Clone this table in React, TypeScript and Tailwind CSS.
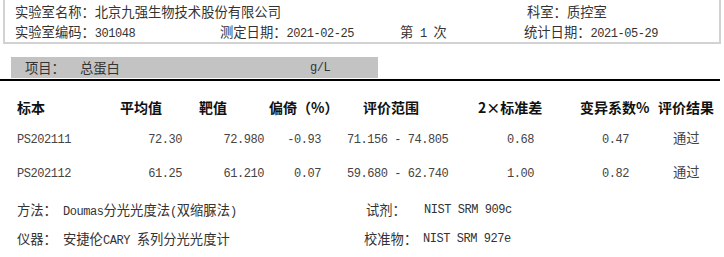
import React from "react";

const L = ({ children }: { children: React.ReactNode }) => (
  <span className="font-['Liberation_Mono',monospace] text-[12px] tracking-[-0.45px] whitespace-pre">
    {children}
  </span>
);

export default function App() {
  return (
    <div className="w-[724px] h-[257px] overflow-hidden bg-white font-['Noto_Sans_CJK_SC',sans-serif] text-[13.3px] leading-none">
      {/* header box */}
      <div className="mx-[3px] h-[44px] border-2 border-t-0 border-[#d2d2d2] pt-[2px] text-[#333]">
        <div className="flex h-[20px] items-center pl-[10px]">
          <span className="w-[512px]">实验室名称：北京九强生物技术股份有限公司</span>
          <span>科室：质控室</span>
        </div>
        <div className="flex h-[20px] items-center pl-[10px]">
          <span className="w-[205px]">
            实验室编码：<L>301048</L>
          </span>
          <span className="w-[180px]">
            测定日期：<L>2021-02-25</L>
          </span>
          <span className="w-[124px]">
            第<L> 1 </L>次
          </span>
          <span>
            统计日期：<L>2021-05-29</L>
          </span>
        </div>
      </div>

      {/* item bar */}
      <div className="mt-[13px] ml-[11px] flex h-[21px] w-[367px] items-center bg-[#c3c3c3] pl-[14px] text-[#333]">
        <span className="w-[55px]">项目：</span>
        <span className="w-[230px]">总蛋白</span>
        <L>g/L</L>
      </div>
      <div className="mt-[1px] h-[2px] w-[720px] bg-black" />

      {/* table header */}
      <div className="mt-[16px] flex h-[20px] items-center pl-[17px] text-[14px] font-bold text-[#111]">
        <span className="w-[103px]">标本</span>
        <span className="w-[79px]">平均值</span>
        <span className="w-[70px]">靶值</span>
        <span className="w-[94px]">偏倚（%）</span>
        <span className="w-[115px]">评价范围</span>
        <span className="w-[102px]">2×标准差</span>
        <span className="w-[78px]">变异系数%</span>
        <span>评价结果</span>
      </div>

      {/* rows */}
      <div className="mt-[11px] flex h-[20px] items-center pl-[17px] text-[#444]">
        <span className="w-[100px]"><L>PS202111</L></span>
        <span className="w-[65px] text-right"><L>72.30</L></span>
        <span className="w-[82px] text-right"><L>72.980</L></span>
        <span className="w-[57px] text-right"><L>-0.93</L></span>
        <span className="w-[26px]" />
        <span className="w-[103px]"><L>71.156 - 74.805</L></span>
        <span className="w-[84px] text-right"><L>0.68</L></span>
        <span className="w-[95px] text-right"><L>0.47</L></span>
        <span className="pl-[44px]">通过</span>
      </div>
      <div className="mt-[14px] flex h-[20px] items-center pl-[17px] text-[#444]">
        <span className="w-[100px]"><L>PS202112</L></span>
        <span className="w-[65px] text-right"><L>61.25</L></span>
        <span className="w-[82px] text-right"><L>61.210</L></span>
        <span className="w-[57px] text-right"><L>0.07</L></span>
        <span className="w-[26px]" />
        <span className="w-[103px]"><L>59.680 - 62.740</L></span>
        <span className="w-[84px] text-right"><L>1.00</L></span>
        <span className="w-[95px] text-right"><L>0.82</L></span>
        <span className="pl-[44px]">通过</span>
      </div>

      {/* footer */}
      <div className="mt-[18px] flex h-[20px] items-center pl-[17px] text-[#333]">
        <span className="w-[46px]">方法：</span>
        <span className="w-[303px]">
          <L>Doumas</L>分光光度法<L>(</L>双缩脲法<L>)</L>
        </span>
        <span className="w-[58px]">试剂：</span>
        <L>NIST SRM 909c</L>
      </div>
      <div className="mt-[9px] flex h-[20px] items-center pl-[17px] text-[#333]">
        <span className="w-[46px]">仪器：</span>
        <span className="w-[301px]">
          安捷伦<L>CARY </L>系列分光光度计
        </span>
        <span className="w-[59px]">校准物：</span>
        <L>NIST SRM 927e</L>
      </div>
    </div>
  );
}
